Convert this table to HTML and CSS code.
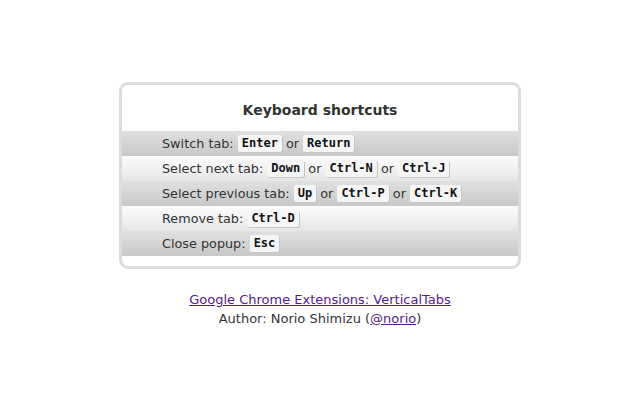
FILE: index.html
```html
<!DOCTYPE html>
<html>
<head>
<meta charset="utf-8">
<link rel="stylesheet" href="styles.css">
</head>
<body>
<div class="panel">
  <h1 class="title">Keyboard shortcuts</h1>
  <ul class="rows">
    <li class="row odd">Switch tab: <kbd class="key">Enter</kbd> or <kbd class="key">Return</kbd></li>
    <li class="row even">Select next tab: <kbd class="key">Down</kbd> or <kbd class="key">Ctrl-N</kbd> or <kbd class="key">Ctrl-J</kbd></li>
    <li class="row odd">Select previous tab: <kbd class="key">Up</kbd> or <kbd class="key">Ctrl-P</kbd> or <kbd class="key">Ctrl-K</kbd></li>
    <li class="row even">Remove tab: <kbd class="key">Ctrl-D</kbd></li>
    <li class="row odd">Close popup: <kbd class="key">Esc</kbd></li>
  </ul>
</div>
<div class="footer">
  <a class="link" href="#">Google Chrome Extensions: VerticalTabs</a><br>
  Author: Norio Shimizu (<a class="link" href="#">@norio</a>)
</div>
</body>
</html>
```
FILE: styles.css
```css
html, body {
  margin: 0;
  padding: 0;
  background: #fff;
}
body {
  font-family: "DejaVu Sans", Verdana, sans-serif;
  font-size: 13px;
  color: #333;
  padding-top: 82px;
}
.panel {
  width: 396px;
  margin: 0 auto;
  border: 3px solid #dcdcdc;
  border-radius: 9px;
  padding: 0 0 10px 0;
  background: #fff;
}
.title {
  margin: 0;
  height: 46px;
  line-height: 50px;
  text-align: center;
  font-size: 14px;
  font-weight: bold;
  color: #333;
}
.rows {
  list-style: none;
  margin: 0;
  padding: 0;
}
.row {
  height: 25px;
  line-height: 25px;
  padding-left: 40px;
  font-size: 12.8px;
}
.odd {
  background: linear-gradient(#e0e0e0, #c8c8c8);
}
.even {
  background: linear-gradient(#fcfcfc, #e6e6e6);
}
.key {
  display: inline-block;
  vertical-align: middle;
  margin-top: -2px;
  font-family: "DejaVu Sans Mono", "Liberation Mono", monospace;
  font-weight: bold;
  font-size: 12px;
  line-height: 17px;
  height: 17px;
  padding: 0 4px;
  background: #f5f5f5;
  color: #111;
  border-radius: 2px;
  box-shadow: 1px 1px 0 #c4c4c4;
}
.footer {
  text-align: center;
  margin-top: 21px;
  line-height: 19px;
  font-size: 13px;
  color: #333;
}
.link {
  color: #551a8b;
}
```
